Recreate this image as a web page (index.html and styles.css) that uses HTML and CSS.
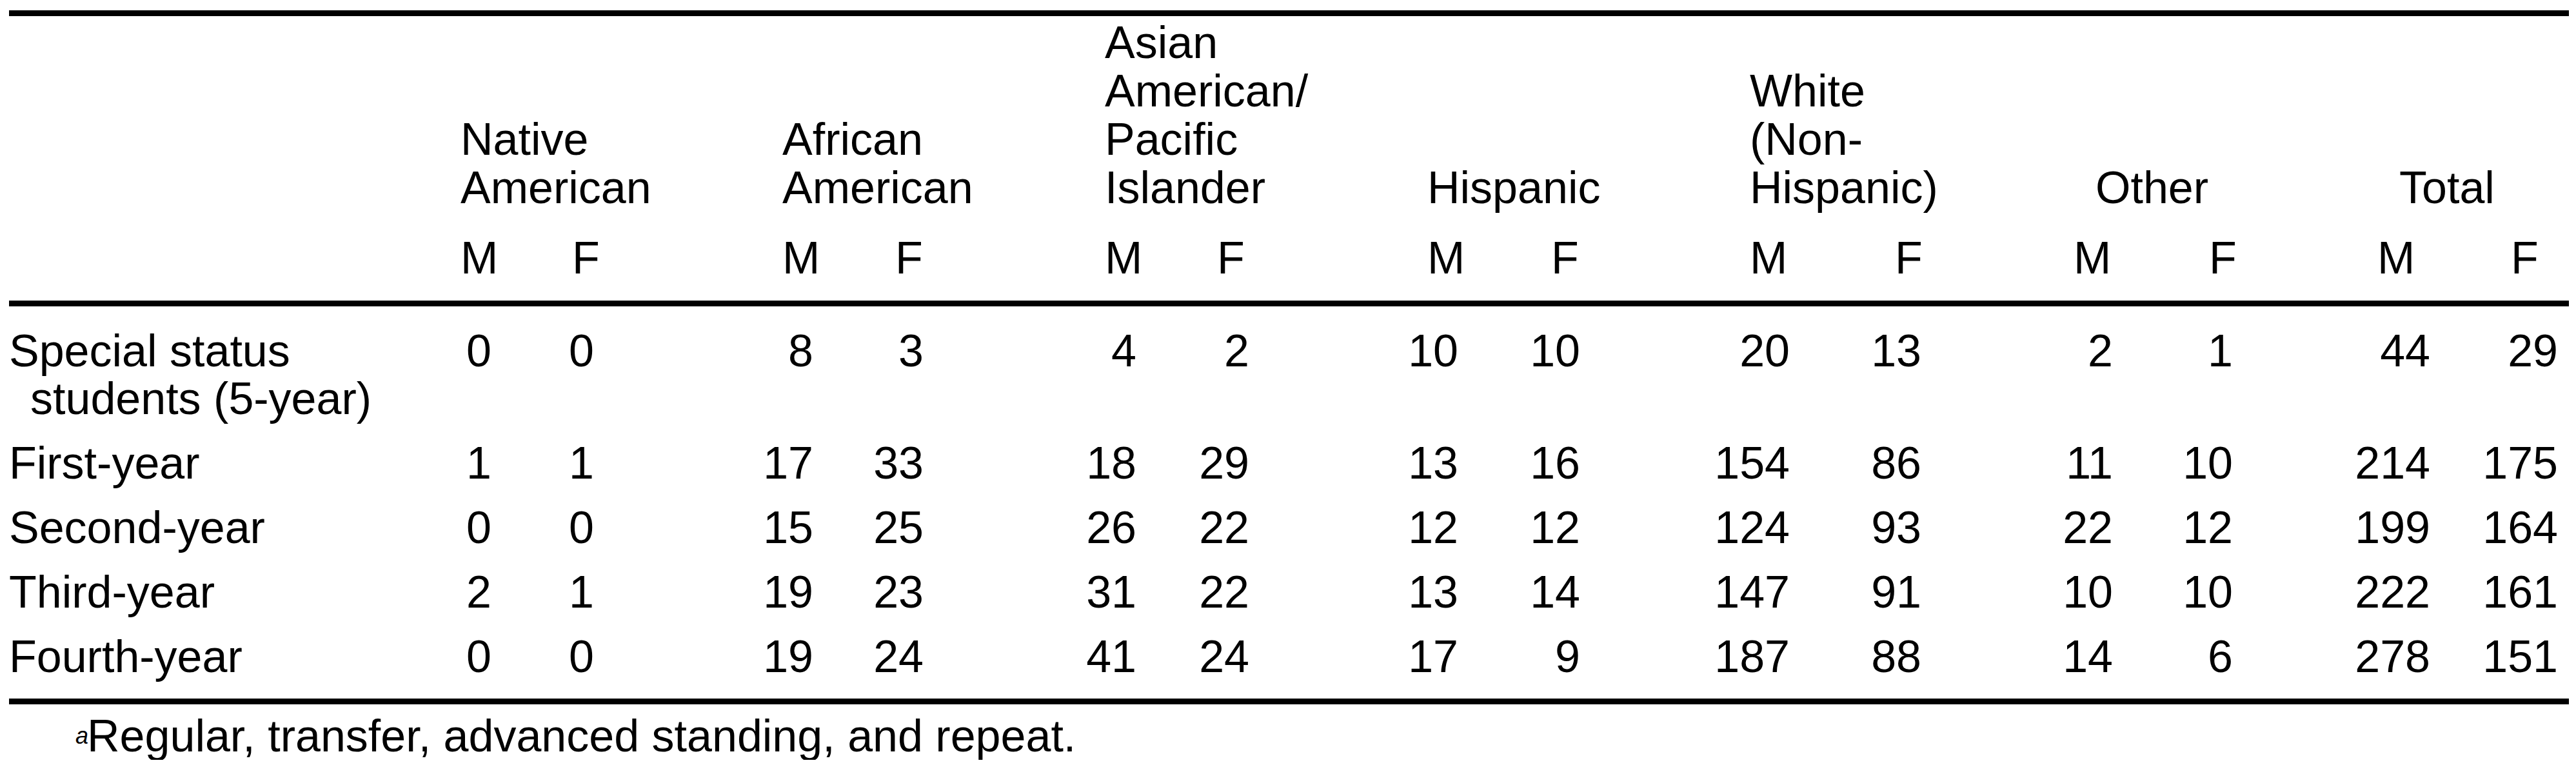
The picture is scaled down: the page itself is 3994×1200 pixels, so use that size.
FILE: index.html
```html
<!DOCTYPE html>
<html lang="en">
<head>
<meta charset="utf-8">
<title>Enrollment by ethnicity and sex</title>
<link rel="stylesheet" href="styles.css">
</head>
<body>
<div class="table">
  <div class="head cols">
    <div class="group g1">Native<br>American</div>
    <div class="group g2">African<br>American</div>
    <div class="group g3">Asian<br>American/<br>Pacific<br>Islander</div>
    <div class="group g4">Hispanic</div>
    <div class="group g5">White<br>(Non-<br>Hispanic)</div>
    <div class="group g6 inset">Other</div>
    <div class="group g7 inset">Total</div>
    <div class="row sex">
      <div class="stub"></div>
      <div>M</div><div>F</div>
      <div>M</div><div>F</div>
      <div>M</div><div>F</div>
      <div>M</div><div>F</div>
      <div>M</div><div>F</div>
      <div>M</div><div>F</div>
      <div>M</div><div>F</div>
    </div>
  </div>
  <div class="body cols">
    <div class="row">
      <div class="stub">Special status<br>students (5-year)</div>
      <div>0</div><div>0</div><div>8</div><div>3</div><div>4</div><div>2</div><div>10</div><div>10</div><div>20</div><div>13</div><div>2</div><div>1</div><div>44</div><div>29</div>
    </div>
    <div class="row">
      <div class="stub">First-year</div>
      <div>1</div><div>1</div><div>17</div><div>33</div><div>18</div><div>29</div><div>13</div><div>16</div><div>154</div><div>86</div><div>11</div><div>10</div><div>214</div><div>175</div>
    </div>
    <div class="row">
      <div class="stub">Second-year</div>
      <div>0</div><div>0</div><div>15</div><div>25</div><div>26</div><div>22</div><div>12</div><div>12</div><div>124</div><div>93</div><div>22</div><div>12</div><div>199</div><div>164</div>
    </div>
    <div class="row">
      <div class="stub">Third-year</div>
      <div>2</div><div>1</div><div>19</div><div>23</div><div>31</div><div>22</div><div>13</div><div>14</div><div>147</div><div>91</div><div>10</div><div>10</div><div>222</div><div>161</div>
    </div>
    <div class="row">
      <div class="stub">Fourth-year</div>
      <div>0</div><div>0</div><div>19</div><div>24</div><div>41</div><div>24</div><div>17</div><div>9</div><div>187</div><div>88</div><div>14</div><div>6</div><div>278</div><div>151</div>
    </div>
  </div>
  <p class="note"><span class="mark">a</span>Regular, transfer, advanced standing, and repeat.</p>
</div>
</body>
</html>
```
FILE: styles.css
```css
html, body {
  margin: 0;
  padding: 0;
  background: #ffffff;
}

body {
  color: #000000;
  font-family: "Liberation Sans", Arial, Helvetica, sans-serif;
  font-size: 70px;
}

.table {
  margin: 16px 0 0 14px;
  width: 3969px;
}

.cols {
  display: grid;
  grid-template-columns:
    [stub] 700px
    [m1] 48px [m1e] 125px [f1] 34px [f1e] 292px
    [m2] 48px [m2e] 127px [f2] 44px [f2e] 281px
    [m3] 49px [m3e] 125px [f3] 50px [f3e] 276px
    [m4] 48px [m4e] 144px [f4] 45px [f4e] 263px
    [m5] 62px [m5e] 163px [f5] 41px [f5e] 236px
    [m6] 61px [m6e] 149px [f6] 37px [f6e] 224px
    [m7] 82px [m7e] 125px [f7] 73px [f7e] 17px [end];
}

.row {
  display: contents;
}

.row > :nth-child(1)  { grid-column: stub; }
.row > :nth-child(2)  { grid-column: m1; }
.row > :nth-child(3)  { grid-column: f1; }
.row > :nth-child(4)  { grid-column: m2; }
.row > :nth-child(5)  { grid-column: f2; }
.row > :nth-child(6)  { grid-column: m3; }
.row > :nth-child(7)  { grid-column: f3; }
.row > :nth-child(8)  { grid-column: m4; }
.row > :nth-child(9)  { grid-column: f4; }
.row > :nth-child(10) { grid-column: m5; }
.row > :nth-child(11) { grid-column: f5; }
.row > :nth-child(12) { grid-column: m6; }
.row > :nth-child(13) { grid-column: f6; }
.row > :nth-child(14) { grid-column: m7; }
.row > :nth-child(15) { grid-column: f7; }

/* header */
.head {
  border-top: 9px solid #000;
  border-bottom: 9px solid #000;
  padding: 4px 0 28px;
  line-height: 75px;
  row-gap: 34px;
  grid-template-rows: auto auto;
}

.group {
  grid-row: 1;
  align-self: end;
  white-space: nowrap;
}

.g1 { grid-column: m1 / f1e; }
.g2 { grid-column: m2 / f2e; }
.g3 { grid-column: m3 / f3e; }
.g4 { grid-column: m4 / f4e; }
.g5 { grid-column: m5 / f5e; }
.g6 { grid-column: m6 / f6e; }
.g7 { grid-column: m7 / f7e; }

.inset {
  padding-left: 34px;
}

.sex > * {
  grid-row: 2;
  white-space: nowrap;
}

/* body */
.body {
  border-bottom: 9px solid #000;
  padding: 32px 0 28px;
  line-height: 74px;
  row-gap: 26px;
}

.body .row > * {
  justify-self: unsafe end;
  white-space: nowrap;
}

.body .row > .stub {
  justify-self: stretch;
  text-align: left;
  padding-left: 33px;
  text-indent: -33px;
}

/* footnote */
.note {
  margin: 0;
  padding: 12px 0 0 103px;
  line-height: 74px;
  white-space: nowrap;
}

.mark {
  font-style: italic;
  font-size: 36px;
  line-height: 1;
  vertical-align: 12px;
  margin-right: -2px;
}
```
